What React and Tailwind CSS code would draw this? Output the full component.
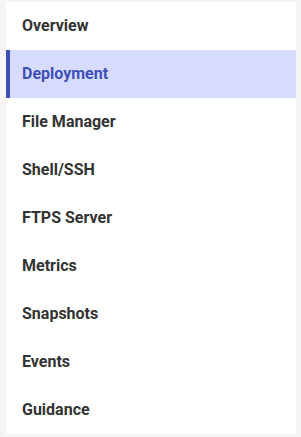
export default function App() {
  const items = ["Overview", "Deployment", "File Manager", "Shell/SSH", "FTPS Server", "Metrics", "Snapshots", "Events", "Guidance"];
  return (
    <div className="w-[301px] h-[437px] bg-[#f5f5f5] pt-[2px] pl-[6px]" style={{ fontFamily: "Roboto, 'Liberation Sans', sans-serif" }}>
      <div className="w-[290px] bg-white flex flex-col">
        {items.map((it) => {
          const active = it === "Deployment";
          return (
            <div
              key={it}
              className={
                active
                  ? "h-[48px] flex items-center pl-[12px] border-l-4 border-[#3f51b5] bg-[#d6dbff] text-[#3f51b5] text-[16px] font-bold"
                  : "h-[48px] flex items-center pl-[16px] text-[#333333] text-[16px] font-bold"
              }
            >
              {it}
            </div>
          );
        })}
      </div>
    </div>
  );
}
